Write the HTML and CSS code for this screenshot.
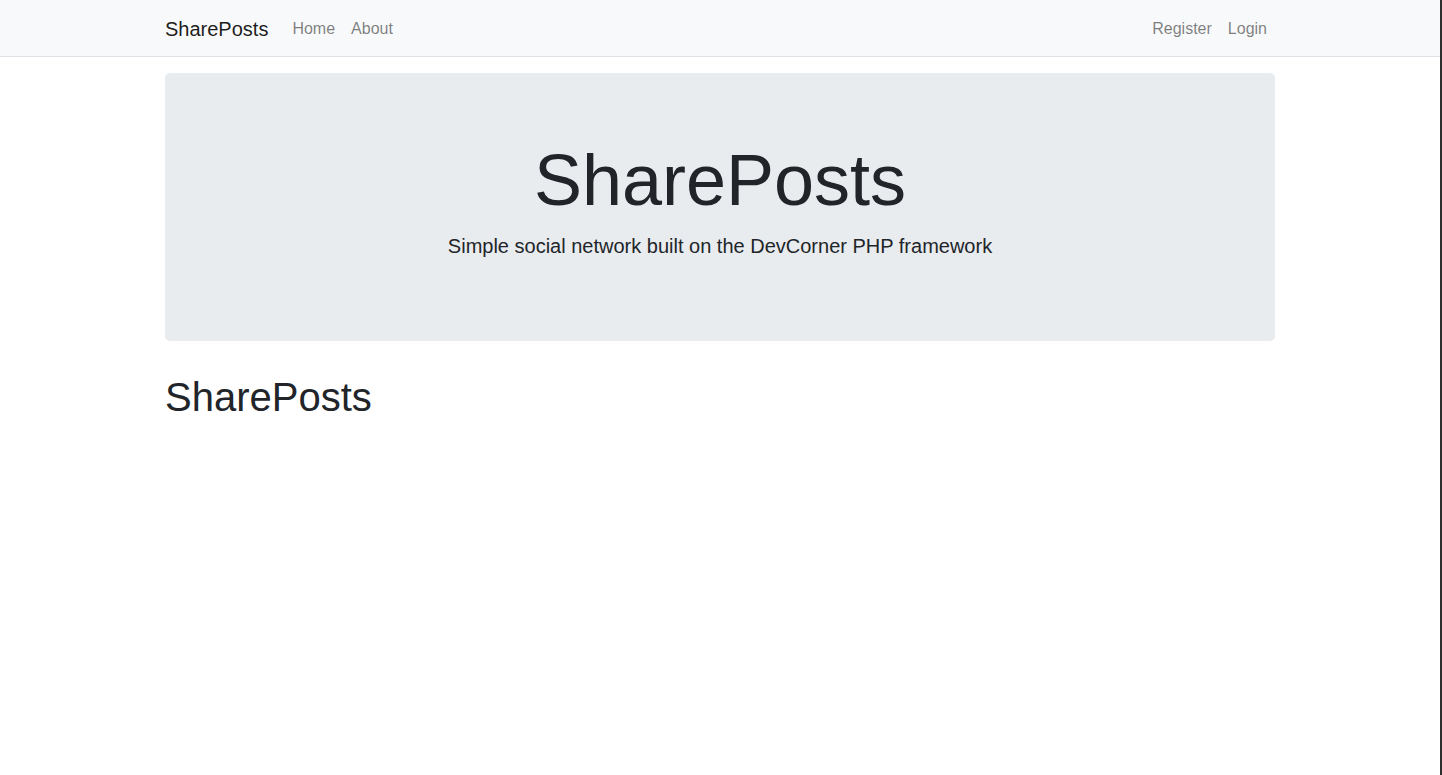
FILE: index.html
```html
<!DOCTYPE html>
<html lang="en">
<head>
<meta charset="utf-8">
<title>SharePosts</title>
<link rel="stylesheet" href="styles.css">
</head>
<body>
<div class="page">
  <nav class="navbar">
    <div class="container nav-inner">
      <a class="brand" href="#">SharePosts</a>
      <ul class="nav-list">
        <li><a class="nav-link" href="#">Home</a></li>
        <li><a class="nav-link" href="#">About</a></li>
      </ul>
      <ul class="nav-list nav-right">
        <li><a class="nav-link" href="#">Register</a></li>
        <li><a class="nav-link" href="#">Login</a></li>
      </ul>
    </div>
  </nav>
  <main class="container">
    <div class="jumbotron">
      <h1 class="display">SharePosts</h1>
      <p class="lead">Simple social network built on the DevCorner PHP framework</p>
    </div>
    <h1 class="title">SharePosts</h1>
  </main>
</div>
</body>
</html>
```

FILE: styles.css
```css
* { box-sizing: border-box; }
html, body { margin: 0; padding: 0; }
body {
  font-family: "Liberation Sans", Arial, sans-serif;
  font-size: 16px;
  line-height: 1.5;
  color: #212529;
  background: #fff;
}
.page {
  width: 1442px;
  min-height: 100vh;
  border-right: 2px solid #2e2e2e;
}
.container {
  width: 1140px;
  margin: 0 auto;
  padding: 0 15px;
}
.navbar {
  background: #f8f9fa;
  border-bottom: 1px solid #dee2e6;
  padding: 9px 0 7px;
  margin-bottom: 16px;
}
.nav-inner {
  display: flex;
  align-items: center;
}
.brand {
  font-size: 20px;
  line-height: 30px;
  padding: 5px 0;
  margin-right: 16px;
  color: rgba(0,0,0,.9);
  text-decoration: none;
}
.nav-list {
  list-style: none;
  margin: 0;
  padding: 0;
  display: flex;
}
.nav-right { margin-left: auto; }
.nav-link {
  display: block;
  padding: 8px;
  color: rgba(0,0,0,.5);
  text-decoration: none;
}
.jumbotron {
  background: #e9ecef;
  border-radius: 4.8px;
  padding: 64px 32px;
  margin-bottom: 32px;
  text-align: center;
}
.display {
  font-size: 72px;
  font-weight: 300;
  line-height: 1.2;
  margin: 0 0 8px;
}
.lead {
  font-size: 20px;
  font-weight: 300;
  margin: 0 0 16px;
}
.title {
  font-size: 40px;
  font-weight: 500;
  line-height: 1.2;
  margin: 0 0 8px;
}
```
